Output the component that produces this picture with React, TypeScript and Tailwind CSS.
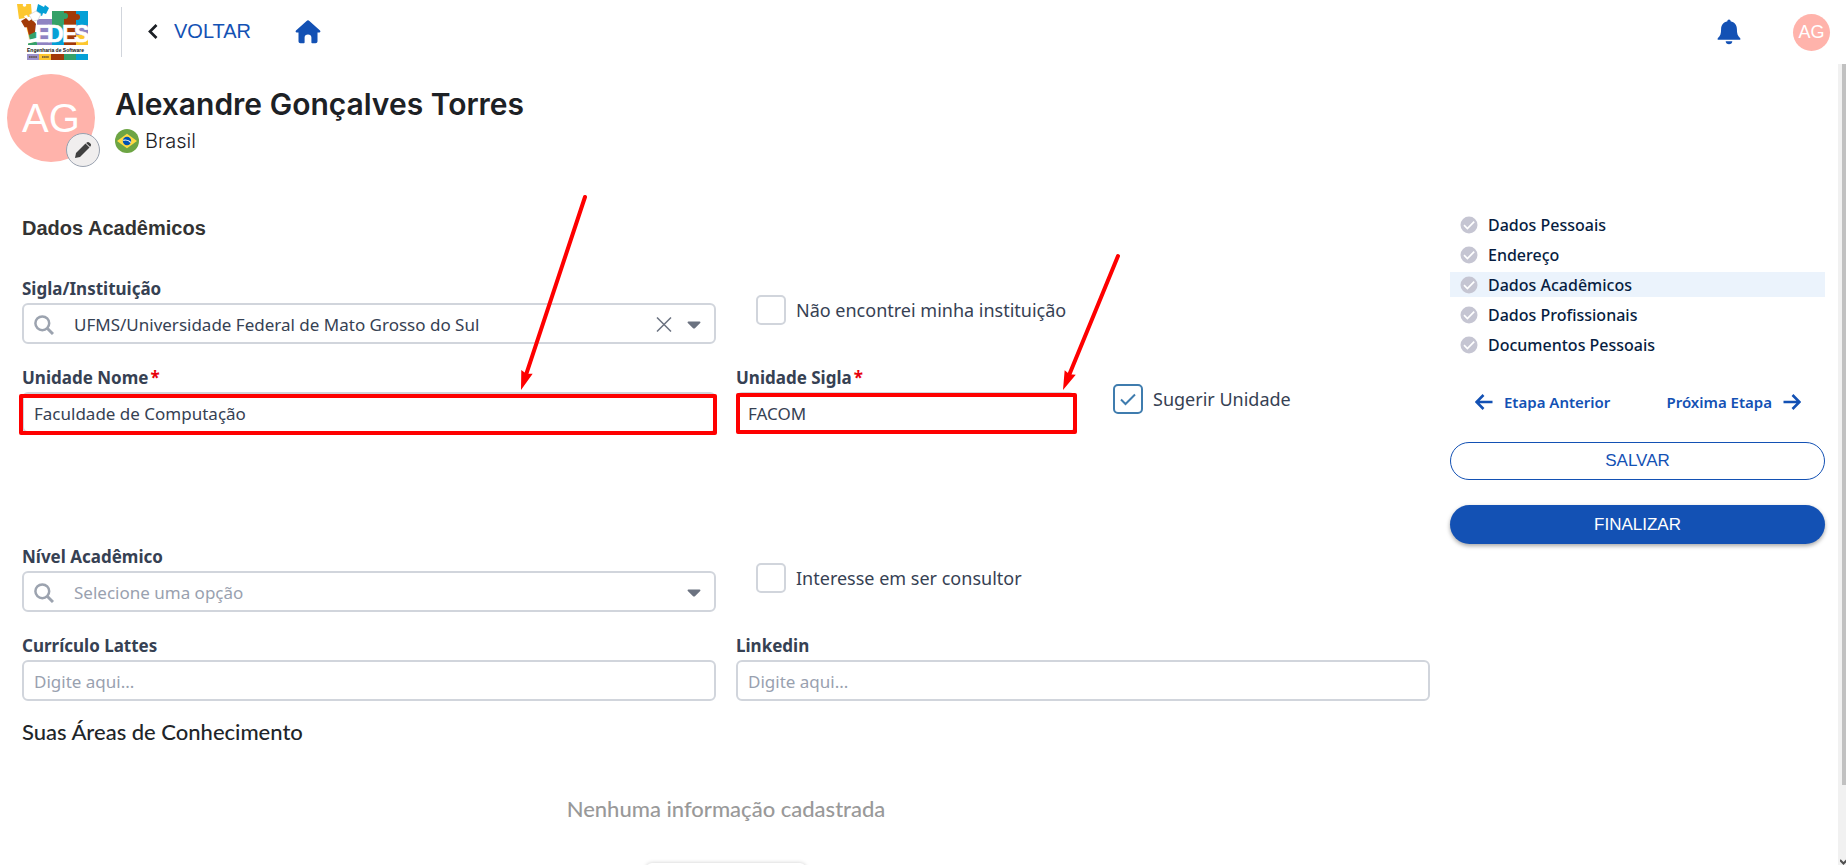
import React from "react";

const INSTITUTION = "UFMS/Universidade Federal de Mato Grosso do Sul";

const STEPS = [
  { label: "Dados Pessoais", active: false },
  { label: "Endereço", active: false },
  { label: "Dados Acadêmicos", active: true },
  { label: "Dados Profissionais", active: false },
  { label: "Documentos Pessoais", active: false },
];

const FIELD =
  "block h-[41px] w-full rounded-md border-2 border-gray-300 bg-white pt-0.5 text-[17px] text-gray-700 placeholder:text-gray-400 outline-none";

const LOGO_LETTERS = [
  { char: "E", x: 18 },
  { char: "D", x: 30 },
  { char: "E", x: 45 },
  { char: "S", x: 57 },
];

function Logo() {
  return (
    <svg width="72" height="58" viewBox="0 0 72 58" role="img" aria-label="LEDES Engenharia de Software">
      <rect x="11" y="29" width="9" height="13" fill="#35a169" />
      <rect x="20" y="16" width="15" height="26" fill="#8f83c2" />
      <path d="M35 8h12v17H35z" fill="#35a169" />
      <path d="M47 8h12v24H47z" fill="#a23a08" />
      <path d="M59 8h12v14H59z" fill="#05a0d6" />
      <path d="M35 25h12v17H35z" fill="#05a0d6" />
      <path d="M47 32h12v10H47z" fill="#a23a08" />
      <path d="M59 22h12v10H59z" fill="#8f83c2" />
      <path d="M59 32h12v10H59z" fill="#fdc72f" />
      <circle cx="48" cy="13" r="3" fill="#35a169" />
      <circle cx="60" cy="14" r="3" fill="#a23a08" />
      <path d="M0 1h14l1 12-4 1-1-2-3 1 1 2-6 1z" fill="#fdc72f" />
      <circle cx="7.500" cy="2" r="1.8" fill="#fff" />
      <path d="M21 1l6 3 1-2 4 3-3 6-3-1-1 3-6-3z" fill="#05a0d6" />
      <path d="M4 18l5-3 3 3 3-2 4 5-1 8-6 3z" fill="#a23a08" />
      <path d="M12 12l7-4 5 3-3 6-5 1z" fill="#fff" stroke="#c9c9c9" strokeWidth=".6" />
      <g fontFamily="'Liberation Sans',sans-serif" fontWeight="700">
        <text x="8" y="40" fontSize="22" fill="#fff" stroke="#fff" strokeWidth="1" transform="rotate(-12 10 40)">L</text>
        <g fontSize="23" fill="#fff" stroke="#fff" strokeWidth=".6">
          {LOGO_LETTERS.map((letter) => (
            <text key={letter.x} x={letter.x} y="39">{letter.char}</text>
          ))}
        </g>
        <rect x="10" y="42" width="62" height="9" fill="#fff" />
        <text x="10" y="49" fontSize="5" fill="#111">Engenharia de Software</text>
      </g>
      <rect x="10" y="51" width="12" height="6" fill="#9d92cb" />
      <rect x="22" y="51" width="12" height="6" fill="#fdc72f" />
      <rect x="34" y="51" width="13" height="6" fill="#a23a08" />
      <rect x="47" y="51" width="12" height="6" fill="#35a169" />
      <rect x="59" y="51" width="12" height="6" fill="#05a0d6" />
      <path d="M12 54h8M25 54h7" stroke="#5a4b3a" strokeWidth="1.4" strokeDasharray="1.6 .5" />
    </svg>
  );
}

function SearchIcon() {
  return (
    <svg width="20" height="20" viewBox="0 0 20 20" fill="none" stroke="#9ca3af" aria-hidden="true">
      <circle cx="8.3" cy="8.3" r="6.9" strokeWidth="2.5" />
      <path d="M13.2 13.2l5.8 5.8" strokeWidth="3" />
    </svg>
  );
}

function Caret() {
  return (
    <svg width="14" height="8" viewBox="0 0 14 8" fill="#6b7280" aria-hidden="true">
      <path d="M1.4 .4h11.2c.8 0 1.1.9.6 1.5L8.2 7c-.7.7-1.7.7-2.4 0L.8 1.9C.3 1.3.6.4 1.4.4z" />
    </svg>
  );
}

function Label({ htmlFor, required, children }: { htmlFor: string; required?: boolean; children: React.ReactNode }) {
  return (
    <label htmlFor={htmlFor} className="mb-0.5 block pt-px text-[17px] leading-6 font-bold text-gray-700">
      {children}
      {required && <span className="ml-0.5 text-red-600">*</span>}
    </label>
  );
}

function Check({ id, label, checked }: { id: string; label: string; checked?: boolean }) {
  return (
    <label htmlFor={id} className="flex items-center gap-2.5 text-lg leading-[30px] whitespace-nowrap text-gray-700">
      <span className="relative flex">
        <input
          id={id}
          type="checkbox"
          defaultChecked={checked}
          className="peer size-[30px] appearance-none rounded-[5px] border-2 border-gray-300 bg-white checked:border-[#3f7cae]"
        />
        <svg
          className="pointer-events-none absolute inset-0 hidden peer-checked:block"
          width="30"
          height="30"
          viewBox="0 0 30 30"
          fill="none"
          stroke="#3f7cae"
          strokeWidth="2"
          aria-hidden="true"
        >
          <path d="M8 15.5l4.500 4.500L22 10.500" />
        </svg>
      </span>
      {label}
    </label>
  );
}

function Highlight({ className }: { className: string }) {
  return <span className={"pointer-events-none absolute rounded-[2px] border-4 border-[#fe0000] " + className} />;
}

function Arrow({ dx, dy, className }: { dx: number; dy: number; className: string }) {
  const len = Math.hypot(dx, dy);
  const ux = dx / len;
  const uy = -dy / len;
  const tipX = 6;
  const tipY = dy + 4;
  const bx = tipX + ux * 19;
  const by = tipY + uy * 19;
  return (
    <svg
      className={"pointer-events-none absolute " + className}
      width={dx + 12}
      height={dy + 8}
      fill="#fe0000"
      stroke="#fe0000"
      aria-hidden="true"
    >
      <path
        d={`M${tipX + ux * 14} ${tipY + uy * 14}L${tipX + dx} ${tipY - dy}`}
        strokeWidth="4"
        strokeLinecap="round"
      />
      <path
        stroke="none"
        d={`M${tipX} ${tipY}L${bx + uy * 6} ${by - ux * 6}L${tipX + ux * 17} ${tipY + uy * 17}L${bx - uy * 6} ${by + ux * 6}Z`}
      />
    </svg>
  );
}

function Header() {
  return (
    <header className="flex h-16 shrink-0 items-center pr-4 pl-[17px]">
      <Logo />
      <div className="ml-8 h-[50px] w-px bg-gray-300" />
      <a href="#voltar" className="ml-[26px] flex items-center gap-4 pb-0.5 font-['Liberation_Sans',sans-serif] text-xl text-[#1351b4]">
        <svg width="10" height="15" viewBox="0 0 10 15" fill="none" stroke="#1b1f24" strokeWidth="2.7" aria-hidden="true">
          <path d="M8.5 1L2 7.5 8.5 14" />
        </svg>
        VOLTAR
      </a>
      <a href="#inicio" aria-label="Início" className="ml-11">
        <svg width="26" height="24" viewBox="0 0 26 24" fill="#1351b4" aria-hidden="true">
          <path d="M11.6.9c.8-.8 2-.8 2.800 0L25 10.600c.8.8.4 1.900-.7 1.900H22.500v8.700c0 1.200-.8 2-2 2h-3.300c-.5 0-.8-.3-.8-.8v-5c0-1.700-1.300-2.800-3.400-2.800s-3.400 1.100-3.400 2.800v5c0 .5-.3.8-.8.8H5.500c-1.200 0-2-.8-2-2v-8.700H1.700c-1.100 0-1.500-1.100-.7-1.900z" />
        </svg>
      </a>
      <button type="button" aria-label="Notificações" className="ml-auto">
        <svg width="24" height="26" viewBox="0 0 24 26" fill="#1351b4" aria-hidden="true">
          <path d="M12 .5c1 0 1.600.7 1.600 1.800 3.900.8 6.300 3.800 6.300 7.700 0 4.500.7 7 3.100 8.900.9.8.5 1.900-.6 1.900H1.600c-1.100 0-1.500-1.100-.6-1.900C3.400 17 4.100 14.500 4.100 10c0-3.900 2.400-6.900 6.300-7.700C10.400 1.200 11 .5 12 .5z" />
          <path d="M8.700 22.200h6.600c0 1.900-1.400 3-3.300 3s-3.300-1.100-3.300-3z" />
        </svg>
      </button>
      <div className="ml-[52px] flex size-[37px] items-center justify-center rounded-full bg-[#ffb3ab] font-['Liberation_Sans',sans-serif] text-lg text-white">
        AG
      </div>
    </header>
  );
}

function Profile() {
  return (
    <section className="flex gap-5 pt-2.5 pl-[7px]">
      <div className="relative flex size-[88px] items-center justify-center rounded-full bg-[#ffb3ab] font-['Liberation_Sans',sans-serif] text-[40px] text-white">
        AG
        <button
          type="button"
          aria-label="Editar foto"
          className="absolute -right-[5px] -bottom-[5px] flex size-[34px] items-center justify-center rounded-full border border-gray-400 bg-[#f0eeee]"
        >
          <svg width="18" height="18" viewBox="0 0 18 18" fill="#404040" aria-hidden="true">
            <path d="M1 17l1-5L11.500 2.500l4 4L6 16z" />
            <path d="M12.500 1.700c1-1 2-1 3 0l.9.9c.9.9.9 1.900 0 2.800l-.4.400-3.900-3.700z" />
          </svg>
        </button>
      </div>
      <div className="pt-2">
        <h1 className="font-[Inter,sans-serif] text-[30px] leading-[44px] font-semibold text-[#1d2125]">
          Alexandre Gonçalves Torres
        </h1>
        <p className="mt-px flex items-center gap-1.5 font-[Inter,sans-serif] text-xl leading-7 font-light text-[#1d2125]">
          <svg width="24" height="24" viewBox="0 0 24 24" aria-hidden="true">
            <circle cx="12" cy="12" r="12" fill="#6da544" />
            <path d="M12 4.700L22 12l-10 7.300L2 12z" fill="#ffda44" />
            <circle cx="12" cy="12" r="4.200" fill="#0052b4" />
            <path d="M8.200 11.300c2.800-.7 5.700 0 7.600 2.200" stroke="#f0f0f0" strokeWidth="1.2" fill="none" />
          </svg>
          Brasil
        </p>
      </div>
    </section>
  );
}

function AcademicForm() {
  return (
    <form className="min-w-0 flex-1">
      <h2 className="font-['Liberation_Sans',sans-serif] text-xl leading-7 font-bold text-[#333]">Dados Acadêmicos</h2>

      <div className="mt-[34px] grid grid-cols-2 gap-x-5 gap-y-[21px]">
        <div>
          <Label htmlFor="instituicao">Sigla/Instituição</Label>
          <div className="relative">
            <select id="instituicao" className={FIELD + " appearance-none pl-[50px]"}>
              <option>{INSTITUTION}</option>
            </select>
            <span className="pointer-events-none absolute top-3 left-3">
              <SearchIcon />
            </span>
            <button type="button" aria-label="Limpar" className="absolute top-[14px] right-11">
              <svg width="16" height="15" viewBox="0 0 16 15" stroke="#6b7280" strokeWidth="1.5" aria-hidden="true">
                <path d="M1 .5l14 14M15 .5L1 14.500" />
              </svg>
            </button>
            <span className="pointer-events-none absolute top-[18px] right-[15px]">
              <Caret />
            </span>
          </div>
        </div>
        <div className="pt-[19px] pl-5">
          <Check id="nao-encontrei" label="Não encontrei minha instituição" />
        </div>

        <div>
          <Label htmlFor="unidade-nome" required>Unidade Nome</Label>
          <div className="relative">
            <input id="unidade-nome" defaultValue="Faculdade de Computação" className={FIELD + " px-2.5"} />
            <Highlight className="top-0.5 -right-px -bottom-0.5 -left-[3px]" />
            <Arrow dx={64} dy={193} className="right-[125px] bottom-[39px]" />
          </div>
        </div>
        <div className="grid grid-cols-2 gap-x-4">
          <div>
            <Label htmlFor="unidade-sigla" required>Unidade Sigla</Label>
            <div className="relative">
              <input id="unidade-sigla" defaultValue="FACOM" className={FIELD + " px-2.5"} />
              <Highlight className="top-px -right-0.5 -bottom-px left-0" />
              <Arrow dx={55} dy={134} className="-right-[49px] bottom-[39px]" />
            </div>
          </div>
          <div className="pt-[19px] pl-[22px]">
            <Check id="sugerir" label="Sugerir Unidade" checked />
          </div>
        </div>

        <div className="col-span-2 h-[69px]" />

        <div>
          <Label htmlFor="nivel">Nível Acadêmico</Label>
          <div className="relative">
            <select id="nivel" className={FIELD + " appearance-none pl-[50px] !text-gray-400"}>
              <option>Selecione uma opção</option>
            </select>
            <span className="pointer-events-none absolute top-3 left-3">
              <SearchIcon />
            </span>
            <span className="pointer-events-none absolute top-[18px] right-[15px]">
              <Caret />
            </span>
          </div>
        </div>
        <div className="pt-[19px] pl-5">
          <Check id="consultor" label="Interesse em ser consultor" />
        </div>

        <div>
          <Label htmlFor="lattes">Currículo Lattes</Label>
          <input id="lattes" placeholder="Digite aqui..." className={FIELD + " px-2.5"} />
        </div>
        <div>
          <Label htmlFor="linkedin">Linkedin</Label>
          <input id="linkedin" placeholder="Digite aqui..." className={FIELD + " px-2.5"} />
        </div>
      </div>

      <h3 className="mt-[17px] font-[Lato,sans-serif] text-[22px] leading-7 font-medium text-[#212529]">
        Suas Áreas de Conhecimento
      </h3>
      <p className="mt-[49px] text-center font-[Lato,sans-serif] text-[22px] leading-7 font-medium text-[#999]">
        Nenhuma informação cadastrada
      </p>
      <div className="mx-auto mt-10 h-10 w-[160px] rounded-md bg-white shadow-[0_0_4px_rgba(0,0,0,0.2)]" />
    </form>
  );
}

function Sidebar() {
  return (
    <aside className="-mt-0.5 w-[375px] shrink-0">
      <ol className="flex flex-col gap-[5px]">
        {STEPS.map((step) => (
          <li
            key={step.label}
            className={
              "flex h-[25px] items-center gap-2.5 pl-2.5 text-base font-medium text-[#071d41] " +
              (step.active ? "bg-[#ebf3fc]" : "")
            }
          >
            <svg width="18" height="18" viewBox="0 0 18 18" aria-hidden="true">
              <circle cx="9" cy="9" r="8.5" fill="#c5c5d2" />
              <path d="M4 9.200l3.400 3.300L14.200 5.700" fill="none" stroke="#fff" strokeWidth="1.7" />
            </svg>
            {step.label}
          </li>
        ))}
      </ol>

      <nav className="mt-[30px] flex h-[30px] items-center justify-between pr-6 pl-[25px] text-[15px] font-semibold text-[#1351b4]">
        <a href="#anterior" className="flex items-center gap-[11px]">
          <svg width="18" height="16" viewBox="0 0 18 16" fill="none" stroke="#1351b4" strokeWidth="2.6" aria-hidden="true">
            <path d="M17.500 8H2M8.500 1L1.500 8l7 7" />
          </svg>
          Etapa Anterior
        </a>
        <a href="#proxima" className="flex items-center gap-[11px]">
          Próxima Etapa
          <svg width="18" height="16" viewBox="0 0 18 16" fill="none" stroke="#1351b4" strokeWidth="2.6" aria-hidden="true">
            <path d="M.5 8H16M9.500 1l7 7-7 7" />
          </svg>
        </a>
      </nav>

      <button
        type="button"
        className="mt-[25px] block h-[38px] w-full rounded-full border border-[#1351b4] bg-white font-['Liberation_Sans',sans-serif] text-[17px] text-[#1351b4]"
      >
        SALVAR
      </button>
      <button
        type="button"
        className="mt-[25px] block h-[39px] w-full rounded-full bg-[#1351b4] font-['Liberation_Sans',sans-serif] text-[17px] text-white shadow-[0_2px_4px_rgba(0,0,0,0.35)]"
      >
        FINALIZAR
      </button>
    </aside>
  );
}

export default function App() {
  return (
    <div className="flex h-screen flex-col overflow-hidden bg-white font-['Noto_Sans',sans-serif]">
      <Header />
      <div className="flex min-h-0 flex-1">
        <main className="min-w-0 flex-1 overflow-hidden">
          <Profile />
          <div className="mt-[52px] flex gap-5 pr-[13px] pl-[22px]">
            <AcademicForm />
            <Sidebar />
          </div>
        </main>
        <div className="flex w-2 flex-col items-end bg-[#f1f1f1]" aria-hidden="true">
          <div className="h-9/10 w-1 bg-[#c1c1c1]" />
          <svg className="mt-auto" width="6" height="6" viewBox="0 0 6 6" fill="none" stroke="#505050" strokeWidth="2">
            <path d="M0 1l3.500 3.500L7 1" />
          </svg>
        </div>
      </div>
    </div>
  );
}
